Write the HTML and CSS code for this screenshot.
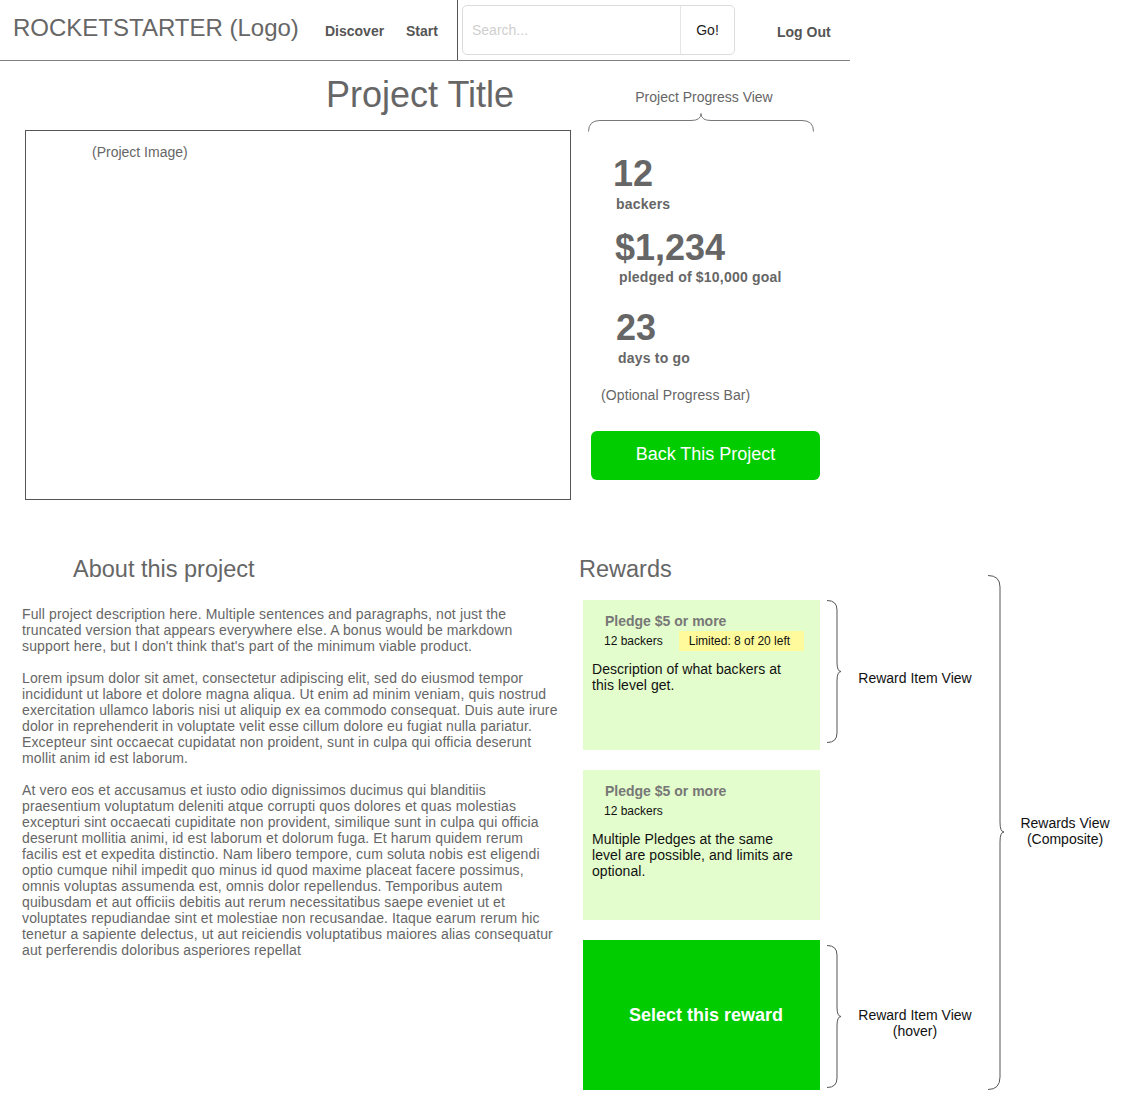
FILE: index.html
```html
<!DOCTYPE html>
<html lang="en">
<head>
<meta charset="utf-8">
<title>Rocketstarter - Project</title>
<link rel="stylesheet" href="styles.css">
</head>
<body>
<header class="topbar">
  <div class="logo">ROCKETSTARTER (Logo)</div>
  <a class="nav nav-discover">Discover</a>
  <a class="nav nav-start">Start</a>
  <div class="vdivider"></div>
  <div class="search">
    <div class="search-input">Search...</div>
    <div class="search-go">Go!</div>
  </div>
  <a class="nav nav-logout">Log Out</a>
</header>

<section class="top">
  <div class="left">
    <h1 class="title">Project Title</h1>
    <div class="image-box">(Project Image)</div>
  </div>
  <div class="progress">
    <div class="progress-label">Project Progress View</div>
    <svg class="hbrace" width="226" height="19" viewBox="0 0 226 19">
      <path d="M0.5,18.5 Q0.5,7.5 12,7.5 L103,7.5 Q113,7.5 113,0.5 Q113,7.5 123,7.5 L214,7.5 Q225.5,7.5 225.5,18.5" fill="none" stroke="#777" stroke-width="1"/>
    </svg>
    <div class="stat-num n1">12</div>
    <div class="stat-label l1">backers</div>
    <div class="stat-num n2">$1,234</div>
    <div class="stat-label l2">pledged of $10,000 goal</div>
    <div class="stat-num n3">23</div>
    <div class="stat-label l3">days to go</div>
    <div class="optional">(Optional Progress Bar)</div>
    <button class="back-btn">Back This Project</button>
  </div>
</section>

<section class="bottom">
  <div class="about">
    <h2 class="section-title">About this project</h2>
    <div class="desc">
      <p>Full project description here. Multiple sentences and paragraphs, not just the<br>truncated version that appears everywhere else. A bonus would be markdown<br>support here, but I don't think that's part of the minimum viable product.</p>
      <p>Lorem ipsum dolor sit amet, consectetur adipiscing elit, sed do eiusmod tempor<br>incididunt ut labore et dolore magna aliqua. Ut enim ad minim veniam, quis nostrud<br>exercitation ullamco laboris nisi ut aliquip ex ea commodo consequat. Duis aute irure<br>dolor in reprehenderit in voluptate velit esse cillum dolore eu fugiat nulla pariatur.<br>Excepteur sint occaecat cupidatat non proident, sunt in culpa qui officia deserunt<br>mollit anim id est laborum.</p>
      <p>At vero eos et accusamus et iusto odio dignissimos ducimus qui blanditiis<br>praesentium voluptatum deleniti atque corrupti quos dolores et quas molestias<br>excepturi sint occaecati cupiditate non provident, similique sunt in culpa qui officia<br>deserunt mollitia animi, id est laborum et dolorum fuga. Et harum quidem rerum<br>facilis est et expedita distinctio. Nam libero tempore, cum soluta nobis est eligendi<br>optio cumque nihil impedit quo minus id quod maxime placeat facere possimus,<br>omnis voluptas assumenda est, omnis dolor repellendus. Temporibus autem<br>quibusdam et aut officiis debitis aut rerum necessitatibus saepe eveniet ut et<br>voluptates repudiandae sint et molestiae non recusandae. Itaque earum rerum hic<br>tenetur a sapiente delectus, ut aut reiciendis voluptatibus maiores alias consequatur<br>aut perferendis doloribus asperiores repellat</p>
    </div>
  </div>

  <div class="rewards">
    <div class="rewards-main">
      <h2 class="section-title">Rewards</h2>

      <div class="reward-row first">
        <div class="card">
          <div class="pledge">Pledge $5 or more</div>
          <div class="meta"><span>12 backers</span><span class="badge">Limited: 8 of 20 left</span></div>
          <div class="card-desc">Description of what backers at<br>this level get.</div>
        </div>
        <svg class="vbrace" width="16" height="143" viewBox="0 0 16 143">
          <path d="M1,0.5 Q11,0.5 11,10 L11,62 Q11,71.5 15,71.5 Q11,71.5 11,81 L11,133 Q11,142.5 1,142.5" fill="none" stroke="#555" stroke-width="1"/>
        </svg>
        <div class="note">Reward Item View</div>
      </div>

      <div class="reward-row">
        <div class="card">
          <div class="pledge">Pledge $5 or more</div>
          <div class="meta"><span>12 backers</span></div>
          <div class="card-desc">Multiple Pledges at the same<br>level are possible, and limits are<br>optional.</div>
        </div>
      </div>

      <div class="reward-row">
        <div class="card hover">Select this reward</div>
        <svg class="vbrace low" width="16" height="143" viewBox="0 0 16 143">
          <path d="M1,0.5 Q11,0.5 11,10 L11,62 Q11,71.5 15,71.5 Q11,71.5 11,81 L11,133 Q11,142.5 1,142.5" fill="none" stroke="#555" stroke-width="1"/>
        </svg>
        <div class="note low">Reward Item View<br>(hover)</div>
      </div>
    </div>

    <svg class="big-brace" width="18" height="515" viewBox="0 0 18 515">
      <path d="M1,0.5 Q13,0.5 13,12 L13,247 Q13,257 17,257 Q13,257 13,267 L13,502 Q13,514.5 1,514.5" fill="none" stroke="#555" stroke-width="1"/>
    </svg>
    <div class="note composite">Rewards View<br>(Composite)</div>
  </div>
</section>
</body>
</html>
```

FILE: styles.css
```css
* {
  box-sizing: border-box;
}

body {
  margin: 0;
  width: 1132px;
  background: #fff;
  color: #666;
  font-family: "Liberation Sans", Arial, Helvetica, sans-serif;
}

/* ---------- header ---------- */
.topbar {
  display: flex;
  align-items: flex-start;
  width: 850px;
  height: 61px;
  border-bottom: 1px solid #808080;
}

.logo {
  width: 325px;
  padding: 14px 0 0 13px;
  font-size: 24px;
  line-height: 28px;
  color: #666;
  white-space: nowrap;
}

.nav {
  padding-top: 23px;
  font-size: 14px;
  font-weight: bold;
  line-height: 16px;
  color: #555;
  white-space: nowrap;
}

.nav-discover {
  width: 81px;
}

.nav-start {
  width: 51px;
}

.vdivider {
  width: 1px;
  height: 60px;
  background: #555;
}

.search {
  display: flex;
  width: 273px;
  height: 50px;
  margin: 5px 0 0 4px;
  border: 1px solid #dcdcdc;
  border-radius: 5px;
  background: #fff;
}

.search-input {
  flex: 1;
  padding: 16px 0 0 9px;
  font-size: 14px;
  line-height: 16px;
  color: #cfcfcf;
}

.search-go {
  width: 54px;
  padding-top: 16px;
  border-left: 1px solid #e6e6e6;
  text-align: center;
  font-size: 14px;
  line-height: 16px;
  color: #222;
}

.nav-logout {
  margin-left: 42px;
  padding-top: 24px;
}

/* ---------- top section ---------- */
.top {
  display: flex;
  align-items: flex-start;
}

.left {
  width: 588px;
}

.title {
  margin: 16px 0 0 326px;
  font-size: 36px;
  font-weight: normal;
  line-height: 36px;
  color: #666;
  white-space: nowrap;
}

.image-box {
  width: 546px;
  height: 370px;
  margin: 17px 0 0 25px;
  padding: 13px 0 0 66px;
  border: 1px solid #555;
  font-size: 14px;
  line-height: 16px;
  color: #666;
}

.progress {
  width: 232px;
}

.progress-label {
  margin-top: 28px;
  text-align: center;
  font-size: 14px;
  line-height: 17px;
  color: #666;
}

.hbrace {
  display: block;
  margin-top: 7px;
}

.stat-num {
  font-size: 36px;
  font-weight: bold;
  line-height: 36px;
  color: #666;
}

.stat-label {
  font-size: 14px;
  font-weight: bold;
  line-height: 16px;
  color: #666;
  letter-spacing: 0.2px;
  white-space: nowrap;
}

.n1 { margin: 24px 0 0 25px; }
.l1 { margin: 4px 0 0 28px; }
.n2 { margin: 18px 0 0 27px; }
.l2 { margin: 3px 0 0 31px; }
.n3 { margin: 25px 0 0 28px; }
.l3 { margin: 4px 0 0 30px; }

.optional {
  margin: 21px 0 0 13px;
  font-size: 14px;
  line-height: 16px;
  color: #666;
  letter-spacing: 0.1px;
}

.back-btn {
  display: block;
  width: 229px;
  height: 49px;
  margin: 28px 0 0 3px;
  padding: 0 0 3px;
  border: none;
  border-radius: 6px;
  background: #00cc00;
  color: #fff;
  font-family: inherit;
  font-size: 18px;
  line-height: 20px;
}

/* ---------- bottom section ---------- */
.bottom {
  display: flex;
  align-items: flex-start;
  margin-top: 55px;
}

.about {
  width: 579px;
}

.section-title {
  margin: 0;
  font-size: 23.5px;
  font-weight: normal;
  line-height: 28px;
  color: #666;
  white-space: nowrap;
}

.about .section-title {
  margin-left: 73px;
}

.desc {
  margin-top: 23px;
  padding-left: 22px;
  font-size: 14px;
  line-height: 16px;
  color: #666;
  letter-spacing: 0.13px;
}

.desc p {
  margin: 0 0 16px;
  white-space: nowrap;
}

.rewards {
  display: flex;
  align-items: flex-start;
}

.rewards-main {
  width: 408px;
}

.reward-row {
  display: flex;
  align-items: flex-start;
  margin: 20px 0 0 4px;
}

.reward-row.first {
  margin-top: 17px;
}

.card {
  flex: none;
  width: 237px;
  height: 150px;
  padding-top: 13px;
  background: #e4fdcc;
}

.pledge {
  padding-left: 22px;
  font-size: 14px;
  font-weight: bold;
  line-height: 16px;
  color: #777;
}

.meta {
  display: flex;
  align-items: center;
  height: 20px;
  margin-top: 2px;
  padding-left: 21px;
  font-size: 12px;
  line-height: 14px;
  color: #111;
}

.badge {
  width: 125px;
  height: 20px;
  margin-left: 16px;
  padding-left: 10px;
  background: #fffb9c;
  line-height: 20px;
  white-space: nowrap;
}

.card-desc {
  margin-top: 10px;
  padding-left: 9px;
  font-size: 14px;
  line-height: 16px;
  color: #111;
  letter-spacing: 0.05px;
  white-space: nowrap;
}

.card.hover {
  display: flex;
  align-items: center;
  justify-content: center;
  padding: 0 0 0 9px;
  background: #00cc00;
  color: #fff;
  font-size: 18px;
  font-weight: bold;
}

.vbrace {
  flex: none;
  display: block;
  margin-left: 6px;
}

.vbrace.low {
  margin-top: 5px;
}

.note {
  width: 114px;
  margin: 70px 0 0 16px;
  text-align: center;
  font-size: 14px;
  line-height: 16px;
  color: #111;
  white-space: nowrap;
}

.note.low {
  margin-top: 67px;
}

.big-brace {
  flex: none;
  display: block;
  margin-top: 20px;
}

.note.composite {
  width: 100px;
  margin: 260px 0 0 10px;
}
```
